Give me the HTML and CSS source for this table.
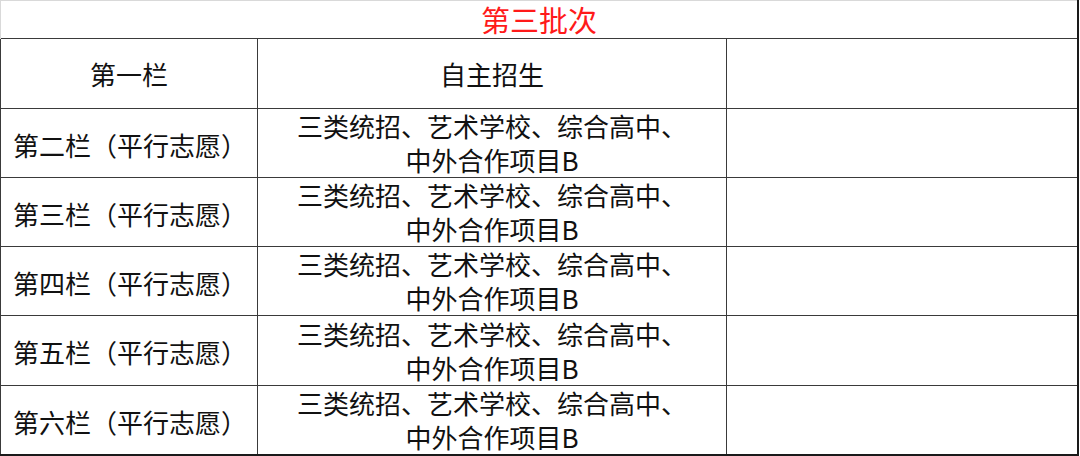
FILE: index.html
```html
<!DOCTYPE html>
<html lang="zh-CN">
<head>
<meta charset="utf-8">
<link rel="stylesheet" href="styles.css">
</head>
<body>
<table class="plan">
  <colgroup>
    <col class="c1"><col class="c2"><col class="c3">
  </colgroup>
  <tr class="title-row"><td colspan="3" class="title">第三批次</td></tr>
  <tr class="row head"><td class="center">第一栏</td><td class="center">自主招生</td><td></td></tr>
  <tr class="row"><td class="label">第二栏（平行志愿）</td><td class="center">三类统招、艺术学校、综合高中、<br>中外合作项目B</td><td></td></tr>
  <tr class="row"><td class="label">第三栏（平行志愿）</td><td class="center">三类统招、艺术学校、综合高中、<br>中外合作项目B</td><td></td></tr>
  <tr class="row"><td class="label">第四栏（平行志愿）</td><td class="center">三类统招、艺术学校、综合高中、<br>中外合作项目B</td><td></td></tr>
  <tr class="row tall"><td class="label">第五栏（平行志愿）</td><td class="center">三类统招、艺术学校、综合高中、<br>中外合作项目B</td><td></td></tr>
  <tr class="row"><td class="label">第六栏（平行志愿）</td><td class="center">三类统招、艺术学校、综合高中、<br>中外合作项目B</td><td></td></tr>
</table>
</body>
</html>
```
FILE: styles.css
```css
html, body {
  margin: 0;
  padding: 0;
  background: #fff;
}
body {
  font-family: "Noto Sans CJK SC", "Noto Sans", sans-serif;
  color: #111;
}
.plan {
  border-collapse: collapse;
  table-layout: fixed;
  width: 1079px;
  border-top: 1px solid #d9d9d9;
  border-left: 1px solid #d9d9d9;
  border-right: 2px solid #1a1a1a;
  border-bottom: 2px solid #1a1a1a;
}
.c1 { width: 257px; }
.c2 { width: 469px; }
.c3 { width: auto; }
td {
  padding: 0;
  font-size: 26px;
  line-height: 34px;
  vertical-align: middle;
  border-left: 1px solid #3a3a3a;
  border-top: 1px solid #3a3a3a;
}
.title-row td {
  border-top: 1px solid #d9d9d9;
  border-left: 1px solid #d9d9d9;
}
.title {
  height: 37px;
  text-align: center;
  color: #ff1a1a;
  font-size: 29px;
  line-height: 37px;
}
.row td {
  height: 68px;
}
.row.head td,
.row.tall td {
  height: 69px;
}
.center {
  text-align: center;
}
.row td.label {
  padding-left: 12px;
  padding-top: 3px;
  height: 65px;
  text-align: left;
}
.row.tall td.label {
  height: 66px;
}
```
